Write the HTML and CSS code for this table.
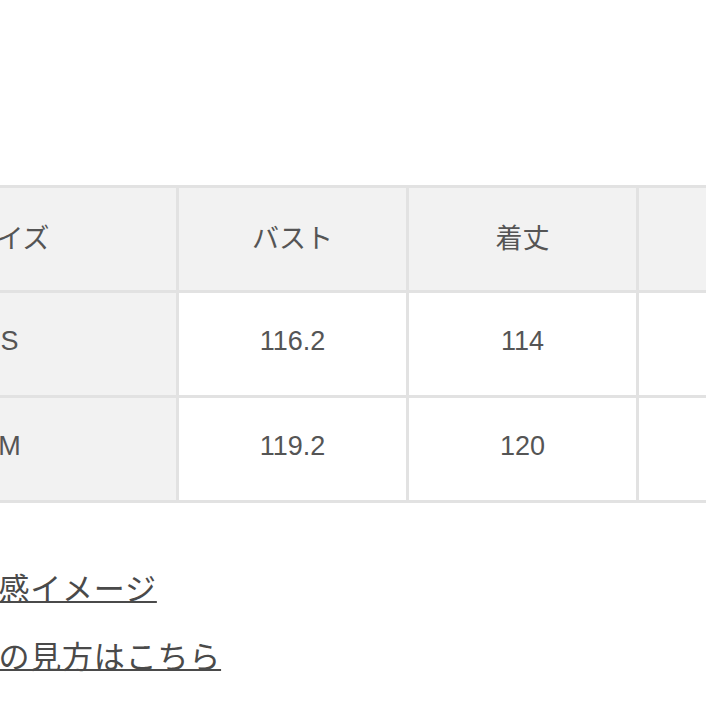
FILE: index.html
```html
<!DOCTYPE html>
<html lang="ja">
<head>
<meta charset="utf-8">
<title>サイズ表</title>
<link rel="stylesheet" href="styles.css">
</head>
<body>
<div class="page">
  <table class="size-table">
    <colgroup>
      <col class="col-label">
      <col class="col-data">
      <col class="col-data">
      <col class="col-data">
    </colgroup>
    <thead>
      <tr>
        <th class="label">サイズ</th>
        <th>バスト</th>
        <th>着丈</th>
        <th></th>
      </tr>
    </thead>
    <tbody>
      <tr>
        <th class="label">S</th>
        <td>116.2</td>
        <td>114</td>
        <td></td>
      </tr>
      <tr>
        <th class="label">M</th>
        <td>119.2</td>
        <td>120</td>
        <td></td>
      </tr>
    </tbody>
  </table>
  <ul class="links">
    <li><a href="#">サイズ感イメージ</a></li>
    <li><a href="#">サイズの見方はこちら</a></li>
  </ul>
</div>
</body>
</html>
```
FILE: styles.css
```css
html, body {
  margin: 0;
  padding: 0;
  background: #ffffff;
  overflow: hidden;
}
body {
  font-family: "Liberation Sans", "Noto Sans CJK JP", sans-serif;
  color: #555555;
}
.page {
  margin-left: -160px;
  padding-top: 185px;
  width: 1100px;
}
.size-table {
  border-collapse: collapse;
  table-layout: fixed;
  width: 1026px;
}
.col-label { width: 336px; }
.col-data { width: 230px; }
.size-table th,
.size-table td {
  border: 3px solid #e2e2e2;
  height: 97px;
  padding: 0 0 5px;
  text-align: center;
  vertical-align: middle;
  font-size: 27px;
  font-weight: normal;
  color: #555555;
}
.size-table thead th,
.size-table th.label {
  background: #f2f2f2;
}
.size-table td {
  background: #ffffff;
}
.links {
  list-style: none;
  margin: 51px 0 0 64px;
  padding: 0;
}
.links li {
  line-height: 65px;
  font-size: 31px;
  letter-spacing: 0.8px;
}
.links a {
  color: #4a4a4a;
  text-decoration: underline;
  text-decoration-thickness: 2px;
  font-family: "Noto Sans CJK JP", sans-serif;
}
```
